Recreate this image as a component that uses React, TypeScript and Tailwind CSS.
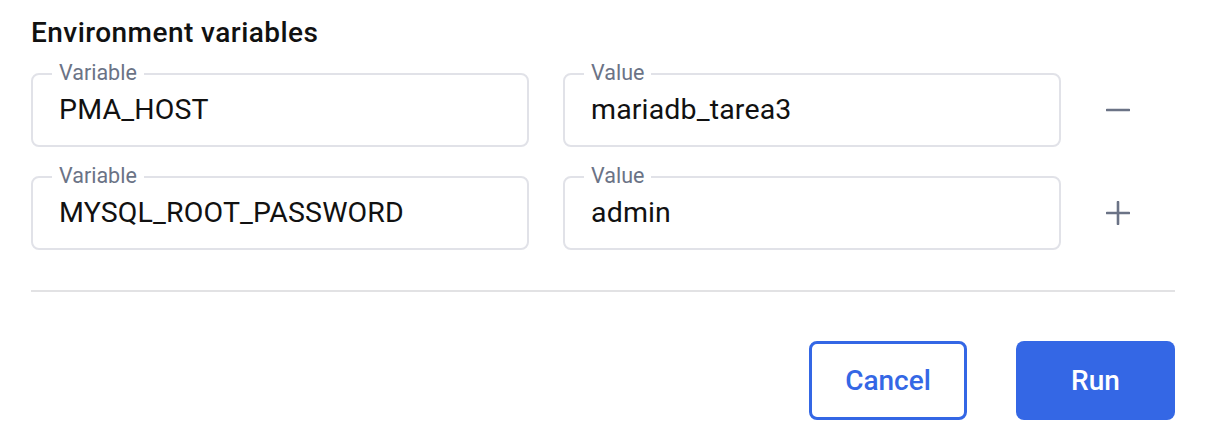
import React from "react";

function Field({ label, value }: { label: string; value: string }) {
  return (
    <div className="relative flex h-[74px] flex-1 items-center rounded-[8px] border-2 border-[#e1e2e8] pl-[26px]">
      <span className="absolute left-[19px] top-[-14px] bg-white px-[7px] text-[21.5px] leading-[24px] text-[#6b7386]">
        {label}
      </span>
      <span className="text-[28.5px] tracking-[0.15px] text-[#111111]">{value}</span>
    </div>
  );
}

function MinusIcon() {
  return (
    <svg width="24" height="24" viewBox="0 0 24 24" fill="none">
      <path d="M1 12h22" stroke="#6b7386" strokeWidth="2.6" strokeLinecap="round" />
    </svg>
  );
}

function PlusIcon() {
  return (
    <svg width="24" height="24" viewBox="0 0 24 24" fill="none">
      <path d="M1 12h22M12 1v22" stroke="#6b7386" strokeWidth="2.6" strokeLinecap="round" />
    </svg>
  );
}

export default function App() {
  const rows = [
    { k: "PMA_HOST", v: "mariadb_tarea3", icon: <MinusIcon /> },
    { k: "MYSQL_ROOT_PASSWORD", v: "admin", icon: <PlusIcon /> },
  ];
  return (
    <div
      className="h-[432px] w-[1212px] bg-white pl-[31px] pr-[37px] pt-[17px]"
      style={{ fontFamily: "Roboto, 'Noto Sans', sans-serif" }}
    >
      <h2 className="text-[28px] font-medium leading-[32px] tracking-[0.45px] text-[#111111]">
        Environment variables
      </h2>
      <div className="mt-[24px] flex flex-col gap-[29px]">
        {rows.map((r) => (
          <div key={r.k} className="flex items-center">
            <div className="flex w-[1030px] gap-[34px]">
              <Field label="Variable" value={r.k} />
              <Field label="Value" value={r.v} />
            </div>
            <div className="flex flex-1 items-center justify-center">
              <button className="flex h-[44px] w-[44px] items-center justify-center">{r.icon}</button>
            </div>
          </div>
        ))}
      </div>
      <div className="mt-[40px] h-[2px] bg-[#e2e2e4]" />
      <div className="mt-[49px] flex justify-end gap-[49px]">
        <button className="flex h-[79px] w-[158px] items-center justify-center rounded-[8px] border-[3px] border-[#3467e5] text-[28px] font-medium text-[#3467e5]">
          Cancel
        </button>
        <button className="flex h-[79px] w-[159px] items-center justify-center rounded-[8px] bg-[#3467e5] text-[28px] font-medium text-white">
          Run
        </button>
      </div>
    </div>
  );
}
